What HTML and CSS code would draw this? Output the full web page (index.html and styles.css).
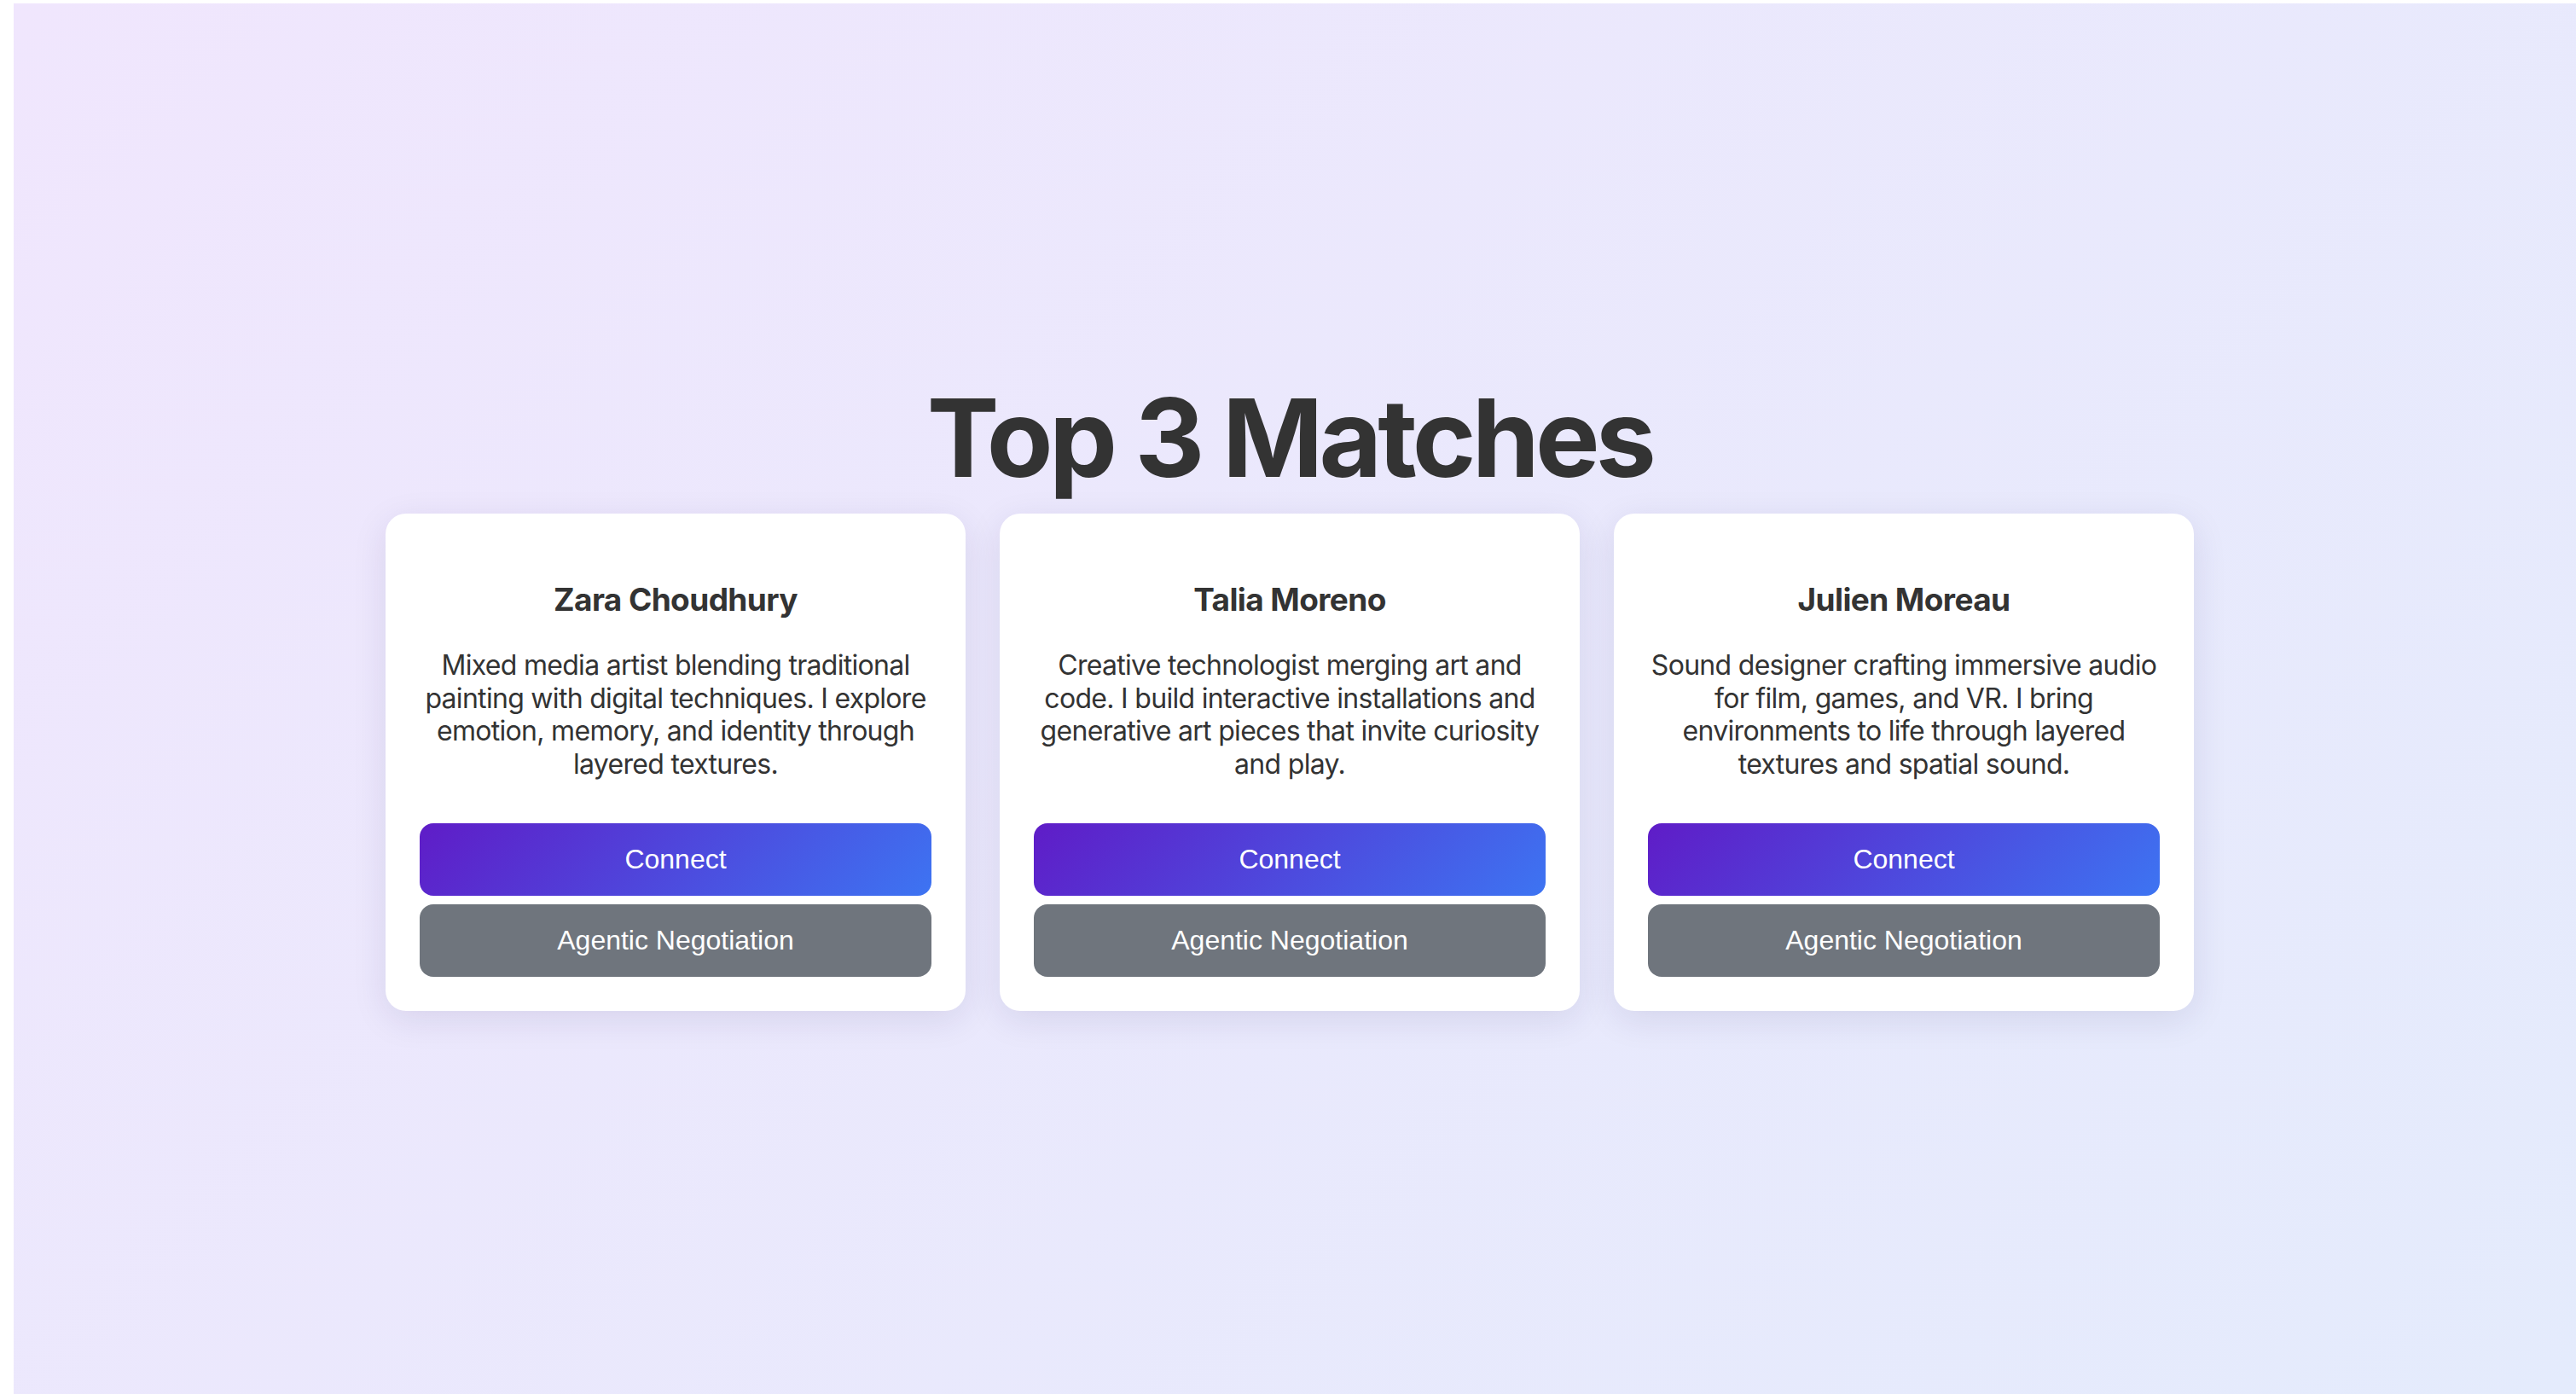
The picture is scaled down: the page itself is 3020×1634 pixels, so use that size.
FILE: index.html
```html
<!DOCTYPE html>
<html lang="en">
<head>
<meta charset="utf-8">
<title>Top 3 Matches</title>
<link rel="stylesheet" href="styles.css">
</head>
<body>
<div class="page">
  <h1 class="title">Top 3 Matches</h1>
  <div class="cards">
    <div class="card">
      <h3 class="name">Zara Choudhury</h3>
      <p class="bio">Mixed media artist blending traditional painting with digital techniques. I explore emotion, memory, and identity through layered textures.</p>
      <div class="actions">
        <button class="btn btn-connect">Connect</button>
        <button class="btn btn-agent">Agentic Negotiation</button>
      </div>
    </div>
    <div class="card">
      <h3 class="name">Talia Moreno</h3>
      <p class="bio">Creative technologist merging art and code. I build interactive installations and generative art pieces that invite curiosity and play.</p>
      <div class="actions">
        <button class="btn btn-connect">Connect</button>
        <button class="btn btn-agent">Agentic Negotiation</button>
      </div>
    </div>
    <div class="card">
      <h3 class="name">Julien Moreau</h3>
      <p class="bio">Sound designer crafting immersive audio for film, games, and VR. I bring environments to life through layered textures and spatial sound.</p>
      <div class="actions">
        <button class="btn btn-connect">Connect</button>
        <button class="btn btn-agent">Agentic Negotiation</button>
      </div>
    </div>
  </div>
</div>
</body>
</html>
```
FILE: styles.css
```css
html, body {
  margin: 0;
  padding: 0;
  background: #ffffff;
  overflow: hidden;
}

.page {
  margin: 4px 0 0 16px;
  min-height: 1630px;
  box-sizing: border-box;
  padding: 433px 12px 0 0;
  background: linear-gradient(135deg, #f0e6fd 0%, #e4ebfc 100%);
  display: flex;
  flex-direction: column;
  align-items: center;
  font-family: Inter, "Liberation Sans", sans-serif;
  color: #333333;
}

.title {
  margin: 0 0 13px;
  font-size: 127px;
  line-height: 152px;
  font-weight: 700;
  letter-spacing: -4.8px;
}

.cards {
  display: flex;
  gap: 40px;
  justify-content: center;
}

.card {
  width: 680px;
  box-sizing: border-box;
  padding: 40px;
  background: #ffffff;
  border-radius: 24px;
  box-shadow: 0 10px 40px rgba(40, 30, 90, 0.10);
  text-align: center;
  display: flex;
  flex-direction: column;
}

.name {
  margin: 39px 0 0;
  font-size: 37px;
  line-height: 44px;
  font-weight: 700;
  letter-spacing: -0.6px;
}

.bio {
  margin: 36px 0 0;
  font-size: 32px;
  line-height: 38.5px;
  font-weight: 400;
  letter-spacing: -0.7px;
}

.actions {
  margin-top: 50px;
  display: flex;
  flex-direction: column;
  gap: 10px;
}

.btn {
  display: block;
  width: 100%;
  height: 85px;
  border: none;
  border-radius: 16px;
  font-family: "Liberation Sans", Arial, sans-serif;
  font-size: 32px;
  color: #ffffff;
  padding: 0;
}

.btn-connect {
  background: linear-gradient(135deg, #5f1cc7 0%, #3d74f2 100%);
}

.btn-agent {
  background: #6f757d;
}
```
